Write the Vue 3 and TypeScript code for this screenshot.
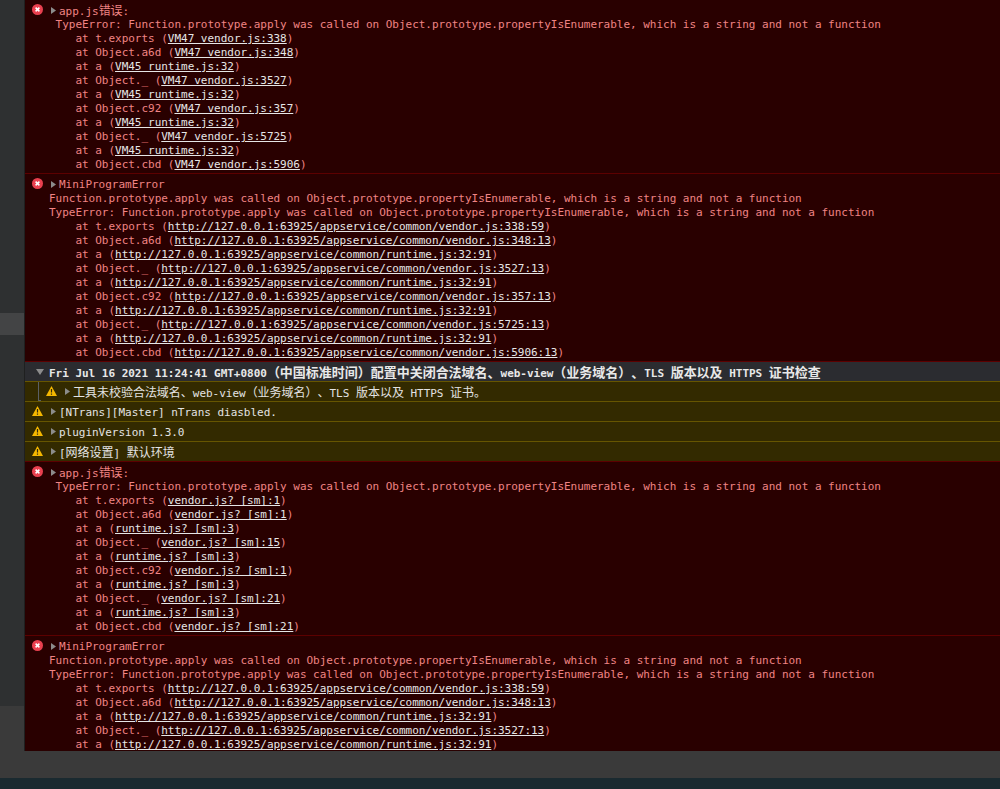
<script setup lang="ts">
interface StackLine { at: string; link: string }
interface ErrorBlock { title: string; cjk?: string; messages: string[]; stack: StackLine[] }

const msg = 'Function.prototype.apply was called on Object.prototype.propertyIsEnumerable, which is a string and not a function'
const host = 'http://127.0.0.1:63925/appservice/common/'
const fns = ['t.exports', 'Object.a6d', 'a', 'Object._', 'a', 'Object.c92', 'a', 'Object._', 'a', 'Object.cbd']

const build = (links: string[]): StackLine[] => links.map((link, i) => ({ at: '    at ' + fns[i] + ' (', link }))

const vm = ['VM47 vendor.js:338', 'VM47 vendor.js:348', 'VM45 runtime.js:32', 'VM47 vendor.js:3527', 'VM45 runtime.js:32', 'VM47 vendor.js:357', 'VM45 runtime.js:32', 'VM47 vendor.js:5725', 'VM45 runtime.js:32', 'VM47 vendor.js:5906']
const http = ['vendor.js:338:59', 'vendor.js:348:13', 'runtime.js:32:91', 'vendor.js:3527:13', 'runtime.js:32:91', 'vendor.js:357:13', 'runtime.js:32:91', 'vendor.js:5725:13', 'runtime.js:32:91', 'vendor.js:5906:13'].map((s) => host + s)
const sm = ['vendor.js? [sm]:1', 'vendor.js? [sm]:1', 'runtime.js? [sm]:3', 'vendor.js? [sm]:15', 'runtime.js? [sm]:3', 'vendor.js? [sm]:1', 'runtime.js? [sm]:3', 'vendor.js? [sm]:21', 'runtime.js? [sm]:3', 'vendor.js? [sm]:21']

const appErr = (links: string[]): ErrorBlock => ({ title: 'app.js', cjk: '错误', messages: [' TypeError: ' + msg], stack: build(links) })
const miniErr = (links: string[]): ErrorBlock => ({ title: 'MiniProgramError', messages: [msg, 'TypeError: ' + msg], stack: build(links) })

const topBlocks: ErrorBlock[] = [appErr(vm), miniErr(http)]
const bottomBlocks: ErrorBlock[] = [appErr(sm), miniErr(http.slice(0, 5))]
</script>

<template>
  <div class="page">
    <div class="main">
      <aside class="side">
        <div class="side-top"></div>
        <div class="side-sel"></div>
        <div class="side-mid"></div>
        <div class="side-low"></div>
      </aside>
      <section class="console">
        <div v-for="(b, i) in topBlocks" :key="'t' + i" class="err">
          <div class="line head">
            <svg class="ico" width="11" height="11" viewBox="0 0 11 11"><circle cx="5.5" cy="5.5" r="5.5" fill="#e9404f" /><path d="M3.6 3.6l3.8 3.8M7.4 3.6l-3.8 3.8" stroke="#fff" stroke-width="1.5" /></svg>
            <svg class="tri" width="5" height="7" viewBox="0 0 5 7"><path d="M0 0l5 3.5-5 3.5z" fill="#8c8c8c" /></svg>
            <span class="title">{{ b.title }}<span v-if="b.cjk" class="cjk">{{ b.cjk }}</span><template v-if="b.cjk">:</template></span>
          </div>
          <div v-for="(m, j) in b.messages" :key="j" class="line">{{ m }}</div>
          <div v-for="(s, j) in b.stack" :key="'s' + j" class="line">{{ s.at }}<span class="link">{{ s.link }}</span>)</div>
        </div>

        <div class="group-head">
          <svg class="tri-down" width="8" height="6" viewBox="0 0 8 6"><path d="M0 0h8l-4 6z" fill="#8c8c8c" /></svg>
          <span>Fri Jul 16 2021 11:24:41 GMT+0800<span class="cjk big">（中国标准时间）配置中关闭合法域名、</span>web-view<span class="cjk big">（业务域名）、</span>TLS <span class="cjk big">版本以及</span> HTTPS <span class="cjk big">证书检查</span></span>
        </div>

        <div class="warn nested">
          <div class="bracket"></div>
          <svg class="ico-w" width="11" height="10" viewBox="0 0 11 10"><path d="M5.5 0L11 10H0z" fill="#f5b800" /><path d="M5.5 3v3.6M5.5 7.6v1.2" stroke="#33290a" stroke-width="1.2" /></svg>
          <svg class="tri" width="5" height="7" viewBox="0 0 5 7"><path d="M0 0l5 3.5-5 3.5z" fill="#8c8c8c" /></svg>
          <span><span class="cjk">工具未校验合法域名、</span>web-view<span class="cjk">（业务域名）、</span>TLS <span class="cjk">版本以及</span> HTTPS <span class="cjk">证书。</span></span>
        </div>
        <div class="warn">
          <svg class="ico-w" width="11" height="10" viewBox="0 0 11 10"><path d="M5.5 0L11 10H0z" fill="#f5b800" /><path d="M5.5 3v3.6M5.5 7.6v1.2" stroke="#33290a" stroke-width="1.2" /></svg>
          <svg class="tri" width="5" height="7" viewBox="0 0 5 7"><path d="M0 0l5 3.5-5 3.5z" fill="#8c8c8c" /></svg>
          <span class="title">[NTrans][Master] nTrans diasbled.</span>
        </div>
        <div class="warn">
          <svg class="ico-w" width="11" height="10" viewBox="0 0 11 10"><path d="M5.5 0L11 10H0z" fill="#f5b800" /><path d="M5.5 3v3.6M5.5 7.6v1.2" stroke="#33290a" stroke-width="1.2" /></svg>
          <svg class="tri" width="5" height="7" viewBox="0 0 5 7"><path d="M0 0l5 3.5-5 3.5z" fill="#8c8c8c" /></svg>
          <span class="title">pluginVersion 1.3.0</span>
        </div>
        <div class="warn">
          <svg class="ico-w" width="11" height="10" viewBox="0 0 11 10"><path d="M5.5 0L11 10H0z" fill="#f5b800" /><path d="M5.5 3v3.6M5.5 7.6v1.2" stroke="#33290a" stroke-width="1.2" /></svg>
          <svg class="tri" width="5" height="7" viewBox="0 0 5 7"><path d="M0 0l5 3.5-5 3.5z" fill="#8c8c8c" /></svg>
          <span>[<span class="cjk">网络设置</span>] <span class="cjk">默认环境</span></span>
        </div>

        <div class="after-warn"></div>

        <div v-for="(b, i) in bottomBlocks" :key="'b' + i" class="err">
          <div class="line head">
            <svg class="ico" width="11" height="11" viewBox="0 0 11 11"><circle cx="5.5" cy="5.5" r="5.5" fill="#e9404f" /><path d="M3.6 3.6l3.8 3.8M7.4 3.6l-3.8 3.8" stroke="#fff" stroke-width="1.5" /></svg>
            <svg class="tri" width="5" height="7" viewBox="0 0 5 7"><path d="M0 0l5 3.5-5 3.5z" fill="#8c8c8c" /></svg>
            <span class="title">{{ b.title }}<span v-if="b.cjk" class="cjk">{{ b.cjk }}</span><template v-if="b.cjk">:</template></span>
          </div>
          <div v-for="(m, j) in b.messages" :key="j" class="line">{{ m }}</div>
          <div v-for="(s, j) in b.stack" :key="'s' + j" class="line">{{ s.at }}<span class="link">{{ s.link }}</span>)</div>
        </div>
      </section>
    </div>
    <div class="bar"></div>
    <div class="foot"></div>
  </div>
</template>

<style scoped>
.page {
  width: 1000px;
  height: 789px;
  display: flex;
  flex-direction: column;
  overflow: hidden;
  background: #3a3a3a;
  font-family: "DejaVu Sans Mono", "Noto Sans CJK SC", monospace;
  font-size: 11px;
  letter-spacing: -0.02px;
  text-spacing-trim: space-all;
}
.main {
  display: flex;
  height: 751px;
  flex: none;
}
.side {
  width: 25px;
  flex: none;
  display: flex;
  flex-direction: column;
  border-right: 1px solid #1f2020;
  box-sizing: border-box;
}
.side-top { height: 313px; background: #2e3031; }
.side-sel { height: 22px; background: #434445; }
.side-mid { height: 371px; background: #2e3031; }
.side-low { flex: 1; background: #3a3a3a; }
.console {
  flex: 1;
  min-width: 0;
  overflow: hidden;
  background: #290000;
}
.err {
  padding: 3px 0 2px 24px;
  border-bottom: 1px solid #5c0000;
  color: #f08484;
}
.line {
  height: 14px;
  line-height: 16px;
  white-space: pre;
}
.head {
  display: flex;
  align-items: center;
  margin-left: -24px;
  line-height: 14px;
}
.ico {
  margin-left: 7px;
  margin-top: -2px;
  flex: none;
}
.head .tri {
  margin-left: 8px;
  margin-right: 3px;
}
.tri { flex: none; }
.title { position: relative; top: 1px; }
.cjk {
  font-family: "Noto Sans CJK SC", sans-serif;
  font-size: 12px;
}
.cjk.big { font-size: 13px; }
.link {
  color: #e6e6e6;
  text-decoration: underline;
}
.group-head {
  height: 19px;
  display: flex;
  align-items: center;
  padding-left: 11px;
  background: #2b2c30;
  color: #e8e8e8;
  font-weight: bold;
  white-space: pre;
}
.tri-down {
  margin-right: 5px;
  flex: none;
}
.warn {
  height: 19px;
  display: flex;
  align-items: center;
  padding-left: 7px;
  border-top: 1px solid #665500;
  background: #332a00;
  color: #e3e3e3;
  white-space: pre;
  position: relative;
}
.warn .ico-w {
  margin-right: 8px;
  margin-top: -2px;
  flex: none;
}
.warn .tri { margin-right: 3px; }
.warn.nested { padding-left: 21px; }
.bracket {
  position: absolute;
  left: 13px;
  top: 0;
  bottom: 0;
  width: 2px;
  border-left: 1px solid #5a5f66;
  border-bottom: 1px solid #5a5f66;
}
.after-warn {
  height: 1px;
  background: #5c0000;
}
.bar {
  height: 27px;
  flex: none;
  background: #3a3a3a;
}
.foot {
  flex: 1;
  background: #1a2a30;
}
</style>

<style>
html, body { margin: 0; background: #3a3a3a; }
</style>
